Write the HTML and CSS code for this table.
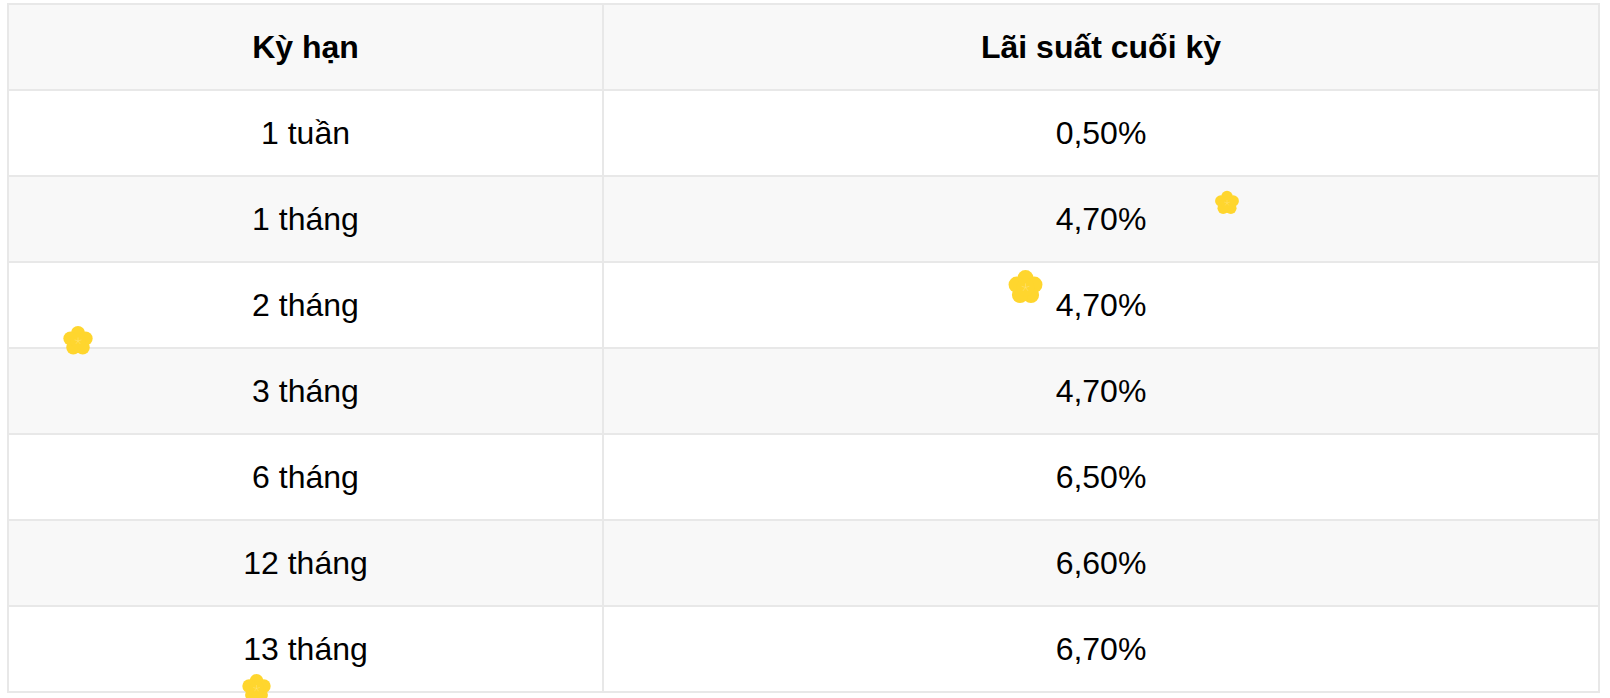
FILE: index.html
```html
<!DOCTYPE html>
<html lang="vi">
<head>
<meta charset="utf-8">
<title>Lãi suất</title>
<link rel="stylesheet" href="styles.css">
</head>
<body>
<div class="wrap">
  <table class="rates">
    <thead>
      <tr><th class="col-term">Kỳ hạn</th><th>Lãi suất cuối kỳ</th></tr>
    </thead>
    <tbody>
      <tr><td>1 tuần</td><td>0,50%</td></tr>
      <tr><td>1 tháng</td><td>4,70%</td></tr>
      <tr><td>2 tháng</td><td>4,70%</td></tr>
      <tr><td>3 tháng</td><td>4,70%</td></tr>
      <tr><td>6 tháng</td><td>6,50%</td></tr>
      <tr><td>12 tháng</td><td>6,60%</td></tr>
      <tr><td>13 tháng</td><td>6,70%</td></tr>
    </tbody>
  </table>
</div>

<svg class="flower f1" viewBox="0 0 100 100" aria-hidden="true"><use href="#bloom"/></svg>
<svg class="flower f2" viewBox="0 0 100 100" aria-hidden="true"><use href="#bloom"/></svg>
<svg class="flower f3" viewBox="0 0 100 100" aria-hidden="true"><use href="#bloom"/></svg>
<svg class="flower f4" viewBox="0 0 100 100" aria-hidden="true"><use href="#bloom"/></svg>

<svg width="0" height="0" class="defs" aria-hidden="true">
  <defs>
    <g id="bloom">
      <circle cx="50" cy="25" r="22" fill="#FFD62E"/>
      <circle cx="73.8" cy="42.3" r="22" fill="#FFD62E"/>
      <circle cx="64.7" cy="70.2" r="22" fill="#FFD62E"/>
      <circle cx="35.3" cy="70.2" r="22" fill="#FFD62E"/>
      <circle cx="26.2" cy="42.3" r="22" fill="#FFD62E"/>
      <circle cx="50" cy="50" r="24" fill="#FFD62E"/>
      <g stroke="#FFE37C" stroke-width="2" stroke-linecap="round" opacity="0.8">
        <line x1="50" y1="50" x2="50" y2="40"/>
        <line x1="50" y1="50" x2="59.5" y2="47"/>
        <line x1="50" y1="50" x2="56" y2="58"/>
        <line x1="50" y1="50" x2="44" y2="58"/>
        <line x1="50" y1="50" x2="40.5" y2="47"/>
      </g>
    </g>
  </defs>
</svg>
</body>
</html>
```

FILE: styles.css
```css
html, body {
  margin: 0;
  padding: 0;
  background: #ffffff;
  overflow: hidden;
  height: 698px;
}

body {
  position: relative;
  font-family: "Liberation Sans", Arial, Helvetica, sans-serif;
  color: #000000;
}

.wrap {
  padding: 3px 10px 0 7px;
}

.rates {
  width: 1593px;
  border-collapse: collapse;
  table-layout: fixed;
  border: 2px solid #e8e8e8;
}

.rates th,
.rates td {
  border: 2px solid #e8e8e8;
  height: 84px;
  padding: 0 16px;
  text-align: center;
  vertical-align: middle;
  font-size: 32px;
  line-height: 36px;
}

.rates th {
  font-weight: bold;
  background: #f8f8f8;
}

.rates .col-term {
  width: 561px;
}

.rates td {
  font-weight: normal;
}

.rates tbody tr:nth-child(even) td {
  background: #f8f8f8;
}

.rates tbody tr:nth-child(odd) td {
  background: #ffffff;
}

.defs {
  position: absolute;
  width: 0;
  height: 0;
}

.flower {
  position: absolute;
  display: block;
}

.f1 {
  left: 1214px;
  top: 190px;
  width: 26px;
  height: 26px;
}

.f2 {
  left: 1007px;
  top: 269px;
  width: 37px;
  height: 37px;
}

.f3 {
  left: 62px;
  top: 325px;
  width: 32px;
  height: 32px;
}

.f4 {
  left: 241px;
  top: 673px;
  width: 31px;
  height: 31px;
}
```
